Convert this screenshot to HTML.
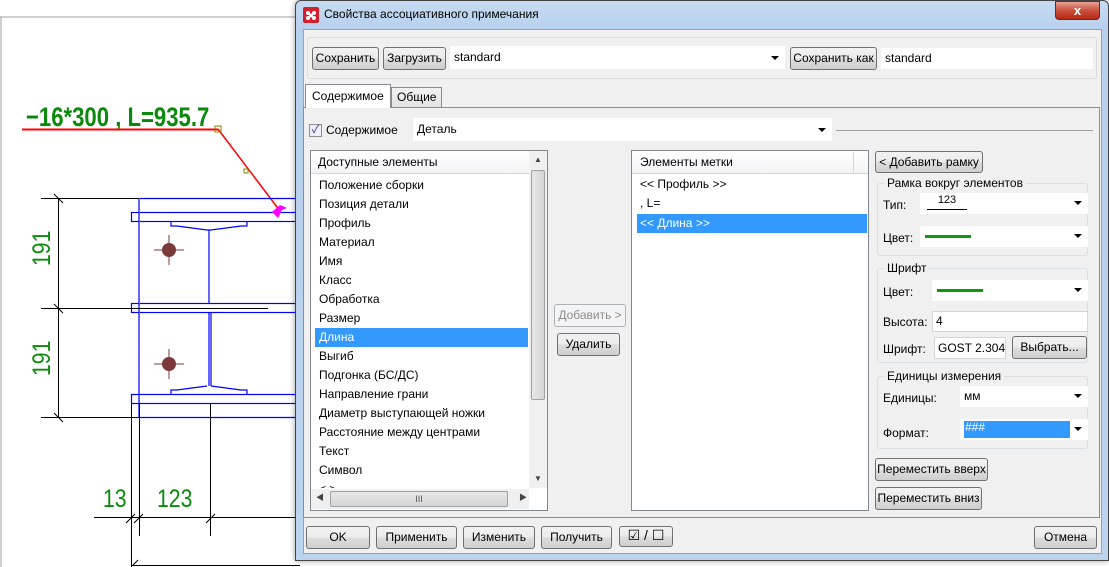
<!DOCTYPE html>
<html><head><meta charset="utf-8"><style>
*{box-sizing:border-box;margin:0;padding:0}
body{width:1109px;height:567px;overflow:hidden;background:#fff;font-family:"Liberation Sans","Noto Sans CJK SC",sans-serif;font-size:12px;color:#000;position:relative}
.a{position:absolute}
.btn{position:absolute;border:1px solid #707070;border-radius:3px;background:linear-gradient(#f2f2f2,#ebebeb 50%,#dddddd 51%,#cfcfcf);text-align:center;font-size:12px;line-height:20px;white-space:nowrap}
.inp{position:absolute;background:#fff;border:1px solid #d5d5d5;font-size:12px;line-height:18px;padding-left:3px;white-space:nowrap;overflow:hidden}
.arr{position:absolute;right:5px;top:7px;width:0;height:0;border-left:4px solid transparent;border-right:4px solid transparent;border-top:4px solid #000}
.grp{position:absolute;border:1px solid #d5dfe5;border-radius:3px}
.gl{position:absolute;top:-8px;left:6px;background:#f0f0f0;padding:0 3px;font-size:12px}
.it{position:absolute;left:8px;height:19px;line-height:19px;font-size:12px;white-space:nowrap}
.sel{background:#3399ff;color:#fff}
</style></head><body>

<svg class="a" style="left:0;top:0" width="300" height="567">
<line x1="0" y1="17" x2="300" y2="17" stroke="#a0a0a0"/>
<line x1="1" y1="17" x2="1" y2="567" stroke="#a0a0a0"/>
<text x="26" y="126" font-family="Liberation Sans Narrow,Liberation Sans,sans-serif" font-weight="bold" font-size="27" fill="#0a8a0a" transform="translate(26 0) scale(0.82 1) translate(-26 0)">−16*300 , L=935.7</text>
<line x1="22" y1="129.5" x2="218" y2="129.5" stroke="#f00" stroke-width="2"/>
<line x1="218" y1="129" x2="280" y2="211" stroke="#f00" stroke-width="1.5"/>
<rect x="215" y="126" width="6" height="6" fill="none" stroke="#808000"/>
<rect x="244" y="169" width="4" height="4" fill="none" stroke="#808000"/>
<g stroke="#0000ff" fill="none" stroke-width="1.2">
<line x1="139" y1="198.5" x2="300" y2="198.5"/>
<rect x="131.5" y="212.5" width="170" height="9"/>
<rect x="131.5" y="303.5" width="170" height="9"/>
<rect x="131.5" y="394.5" width="170" height="9"/>
<line x1="139" y1="417.5" x2="300" y2="417.5"/>
<path d="M171 222v4h6l30 4h2v73M247 222v4h-6l-30 4h-2v73"/>
<path d="M209 313v73M211 313v73M171 394v-4h6l30-4M247 394v-4h-6l-30-4"/>
<line x1="139" y1="198" x2="139" y2="417"/>
</g>
<line x1="139.5" y1="198" x2="139.5" y2="420" stroke="#808000" stroke-dasharray="18 4"/>
<path d="M272 212l8-7 7 3-5 2-4 8z" fill="#ff00ff"/>
<g stroke="#000" stroke-width="1" fill="none">
<line x1="41" y1="198.5" x2="139" y2="198.5"/>
<line x1="41" y1="308.5" x2="268" y2="308.5"/>
<line x1="41" y1="417.5" x2="139" y2="417.5"/>
<line x1="58.5" y1="198" x2="58.5" y2="417"/>
<path d="M54 194l9 9M54 304l9 9M54 413l9 9"/>
<line x1="131.5" y1="403" x2="131.5" y2="567"/>
<line x1="139.5" y1="403" x2="139.5" y2="536"/>
<line x1="210.5" y1="403" x2="210.5" y2="536"/>
<line x1="94" y1="517.5" x2="300" y2="517.5"/>
<path d="M126 523l9-9M134 523l9-9M206 523l9-9M132 566l6-6"/>
<line x1="131" y1="565.5" x2="300" y2="565.5"/>
</g>
<g fill="#7a3a3a"><circle cx="169" cy="250" r="7"/><circle cx="169" cy="364" r="7"/></g>
<g stroke="#7a3a3a"><path d="M154 250h30M169 235v30M154 364h30M169 349v30"/></g>
<g fill="#0a8a0a" font-family="Liberation Sans Narrow,Liberation Sans,sans-serif" font-size="25">
<text transform="translate(50 266) rotate(-90) scale(0.85 1)">191</text>
<text transform="translate(50 376) rotate(-90) scale(0.85 1)">191</text>
<text transform="translate(103 507) scale(0.85 1)">13</text>
<text transform="translate(157 507) scale(0.85 1)">123</text>
</g>
</svg>

<div class="a" style="left:295px;top:0;width:814px;height:561px;border:1px solid #454545;border-radius:6px 6px 0 0;background:linear-gradient(#c6dbf2,#b7d0ec 30px,#bcd3ee);box-shadow:0 0 6px rgba(0,0,0,.4)"></div>
<svg class="a" style="left:303px;top:7px" width="16" height="16"><rect width="16" height="16" rx="2" fill="#d2202e"/><g fill="#fff"><circle cx="5" cy="6" r="2"/><circle cx="11" cy="6" r="2"/><circle cx="5" cy="11" r="2"/><circle cx="11" cy="11" r="2"/><circle cx="8" cy="8.5" r="2"/></g></svg>
<div class="a" style="left:324px;top:7px;font-size:12px">Свойства ассоциативного примечания</div>
<div class="a" style="left:1055px;top:1px;width:45px;height:19px;border:1px solid #6b2a22;border-radius:0 0 4px 4px;background:linear-gradient(#e8a294,#c9503d 50%,#b52a15);color:#fff;font-weight:bold;text-align:center;line-height:17px;font-size:13px">x</div>

<div class="a" style="left:303px;top:29px;width:799px;height:525px;background:#f0f0f0;border:1px solid #8da3be"></div>
<div class="grp" style="left:307px;top:37px;width:790px;height:42px;border-color:#dcdcdc"></div>
<div class="btn" style="left:312px;top:47px;width:67px;height:23px">Сохранить</div>
<div class="btn" style="left:383px;top:47px;width:63px;height:23px">Загрузить</div>
<div class="inp" style="left:450px;top:46px;width:335px;height:23px;border-color:#fff;line-height:21px">standard<div class="arr" style="top:9px"></div></div>
<div class="btn" style="left:790px;top:47px;width:87px;height:23px">Сохранить как</div>
<div class="inp" style="left:881px;top:48px;width:212px;height:21px;border-color:#fff;line-height:19px">standard</div>

<div class="a" style="left:303px;top:107px;width:797px;height:411px;background:#f0f0f0;border:1px solid #898c95"></div>
<div class="a" style="left:391px;top:87px;width:51px;height:21px;border:1px solid #898c95;background:linear-gradient(#f2f2f2,#e3e3e3);padding-left:5px;line-height:19px">Общие</div>
<div class="a" style="left:305px;top:84px;width:86px;height:24px;border:1px solid #898c95;border-bottom:none;background:#fff;padding-left:6px;line-height:22px">Содержимое</div>

<div class="a" style="left:309px;top:124px;width:13px;height:13px;border:1px solid #8f8f8f;background:#eef;color:#2a3a7a;font-size:11px;line-height:11px;text-align:center">✓</div>
<div class="a" style="left:326px;top:123px">Содержимое</div>
<div class="inp" style="left:413px;top:118px;width:419px;height:23px;border-color:#fff;line-height:21px">Деталь<div class="arr" style="top:9px"></div></div>
<div class="a" style="left:836px;top:130px;width:257px;height:1px;background:#a0a0a0"></div>

<div class="a" style="left:310px;top:150px;width:238px;height:361px;background:#fff;border:1px solid #828790"></div>
<div class="a" style="left:311px;top:151px;width:218px;height:23px;background:linear-gradient(#fff,#f3f4f6);border-bottom:1px solid #d5d5d5;padding-left:7px;line-height:23px">Доступные элементы</div>
<div class="a" style="left:311px;top:176px;width:218px;height:312px;overflow:hidden">
<div class="it" style="top:0">Положение сборки</div>
<div class="it" style="top:19px">Позиция детали</div>
<div class="it" style="top:38px">Профиль</div>
<div class="it" style="top:57px">Материал</div>
<div class="it" style="top:76px">Имя</div>
<div class="it" style="top:95px">Класс</div>
<div class="it" style="top:114px">Обработка</div>
<div class="it" style="top:133px">Размер</div>
<div class="it sel" style="top:152px;left:4px;width:213px;padding-left:4px">Длина</div>
<div class="it" style="top:171px">Выгиб</div>
<div class="it" style="top:190px">Подгонка (БС/ДС)</div>
<div class="it" style="top:209px">Направление грани</div>
<div class="it" style="top:228px">Диаметр выступающей ножки</div>
<div class="it" style="top:247px">Расстояние между центрами</div>
<div class="it" style="top:266px">Текст</div>
<div class="it" style="top:285px">Символ</div>
<div class="it" style="top:304px">&lt; &gt;</div>
</div>
<div class="a" style="left:529px;top:151px;width:18px;height:337px;background:#f0f0f0"></div>
<div class="a" style="left:531px;top:170px;width:14px;height:230px;border:1px solid #a0a0a0;border-radius:2px;background:linear-gradient(90deg,#e8e8e8,#d5d5d5)"></div>
<div class="a" style="left:534px;top:155px;font-size:8px;color:#444">▲</div>
<div class="a" style="left:534px;top:474px;font-size:8px;color:#444">▼</div>
<div class="a" style="left:311px;top:489px;width:218px;height:20px;background:#f0f0f0"></div>
<div class="a" style="left:330px;top:491px;width:178px;height:16px;border:1px solid #a0a0a0;border-radius:2px;background:linear-gradient(#e8e8e8,#d5d5d5);text-align:center;font-size:9px;line-height:14px;color:#555">III</div>
<div class="a" style="left:316px;top:492px;font-size:8px;color:#444">◀</div>
<div class="a" style="left:519px;top:492px;font-size:8px;color:#444">▶</div>

<div class="btn" style="left:554px;top:304px;width:72px;height:23px;color:#8d8d8d;border-color:#adb2b5;background:#f4f4f4">Добавить &gt;</div>
<div class="btn" style="left:557px;top:333px;width:63px;height:23px">Удалить</div>

<div class="a" style="left:631px;top:150px;width:238px;height:361px;background:#fff;border:1px solid #828790"></div>
<div class="a" style="left:632px;top:151px;width:236px;height:23px;background:linear-gradient(#fff,#f3f4f6);border-bottom:1px solid #d5d5d5;padding-left:8px;line-height:23px">Элементы метки</div>
<div class="a" style="left:853px;top:152px;width:1px;height:21px;background:#d5d5d5"></div>
<div class="a" style="left:640px;top:177px">&lt;&lt; Профиль &gt;&gt;</div>
<div class="a" style="left:640px;top:196px">, L=</div>
<div class="a sel" style="left:637px;top:214px;width:230px;height:19px;line-height:19px;padding-left:3px">&lt;&lt; Длина &gt;&gt;</div>

<div class="btn" style="left:875px;top:151px;width:108px;height:22px">&lt; Добавить рамку</div>
<div class="grp" style="left:877px;top:183px;width:211px;height:73px"><div class="gl">Рамка вокруг элементов</div></div>
<div class="a" style="left:883px;top:198px">Тип:</div>
<div class="inp" style="left:920px;top:193px;width:168px;height:21px;border-color:#fff"><span style="position:absolute;left:6px;top:-3px;width:40px;border-bottom:1px solid #000;text-align:center;font-size:11px">123</span><div class="arr"></div></div>
<div class="a" style="left:883px;top:231px">Цвет:</div>
<div class="inp" style="left:920px;top:226px;width:168px;height:21px;border-color:#fff"><span style="position:absolute;left:4px;top:8px;width:46px;height:3px;background:#0a9a0a"></span><div class="arr"></div></div>

<div class="grp" style="left:877px;top:268px;width:211px;height:95px"><div class="gl">Шрифт</div></div>
<div class="a" style="left:883px;top:285px">Цвет:</div>
<div class="inp" style="left:932px;top:280px;width:156px;height:21px;border-color:#fff"><span style="position:absolute;left:4px;top:8px;width:46px;height:3px;background:#0a9a0a"></span><div class="arr"></div></div>
<div class="a" style="left:883px;top:315px">Высота:</div>
<div class="inp" style="left:932px;top:311px;width:156px;height:21px">4</div>
<div class="a" style="left:883px;top:342px">Шрифт:</div>
<div class="inp" style="left:934px;top:337px;width:72px;height:22px;line-height:20px">GOST 2.304 t</div>
<div class="btn" style="left:1012px;top:336px;width:75px;height:23px">Выбрать...</div>

<div class="grp" style="left:877px;top:376px;width:211px;height:73px"><div class="gl">Единицы измерения</div></div>
<div class="a" style="left:883px;top:391px">Единицы:</div>
<div class="inp" style="left:960px;top:386px;width:128px;height:21px;border-color:#fff">мм<div class="arr"></div></div>
<div class="a" style="left:883px;top:426px">Формат:</div>
<div class="inp" style="left:960px;top:419px;width:128px;height:21px;border-color:#fff;padding:0"><span style="position:absolute;left:3px;top:1px;width:106px;height:17px;background:#3399ff;color:#fff;line-height:13px;padding-left:1px">###</span><div class="arr"></div></div>

<div class="btn" style="left:875px;top:458px;width:113px;height:23px">Переместить вверх</div>
<div class="btn" style="left:875px;top:487px;width:107px;height:23px">Переместить вниз</div>

<div class="btn" style="left:306px;top:526px;width:64px;height:23px">OK</div>
<div class="btn" style="left:376px;top:526px;width:81px;height:23px">Применить</div>
<div class="btn" style="left:463px;top:526px;width:72px;height:23px">Изменить</div>
<div class="btn" style="left:541px;top:526px;width:71px;height:23px">Получить</div>
<div class="btn" style="left:619px;top:526px;width:54px;height:21px;line-height:17px;font-size:14px">☑ / ☐</div>
<div class="btn" style="left:1034px;top:526px;width:63px;height:23px">Отмена</div>
</body></html>
